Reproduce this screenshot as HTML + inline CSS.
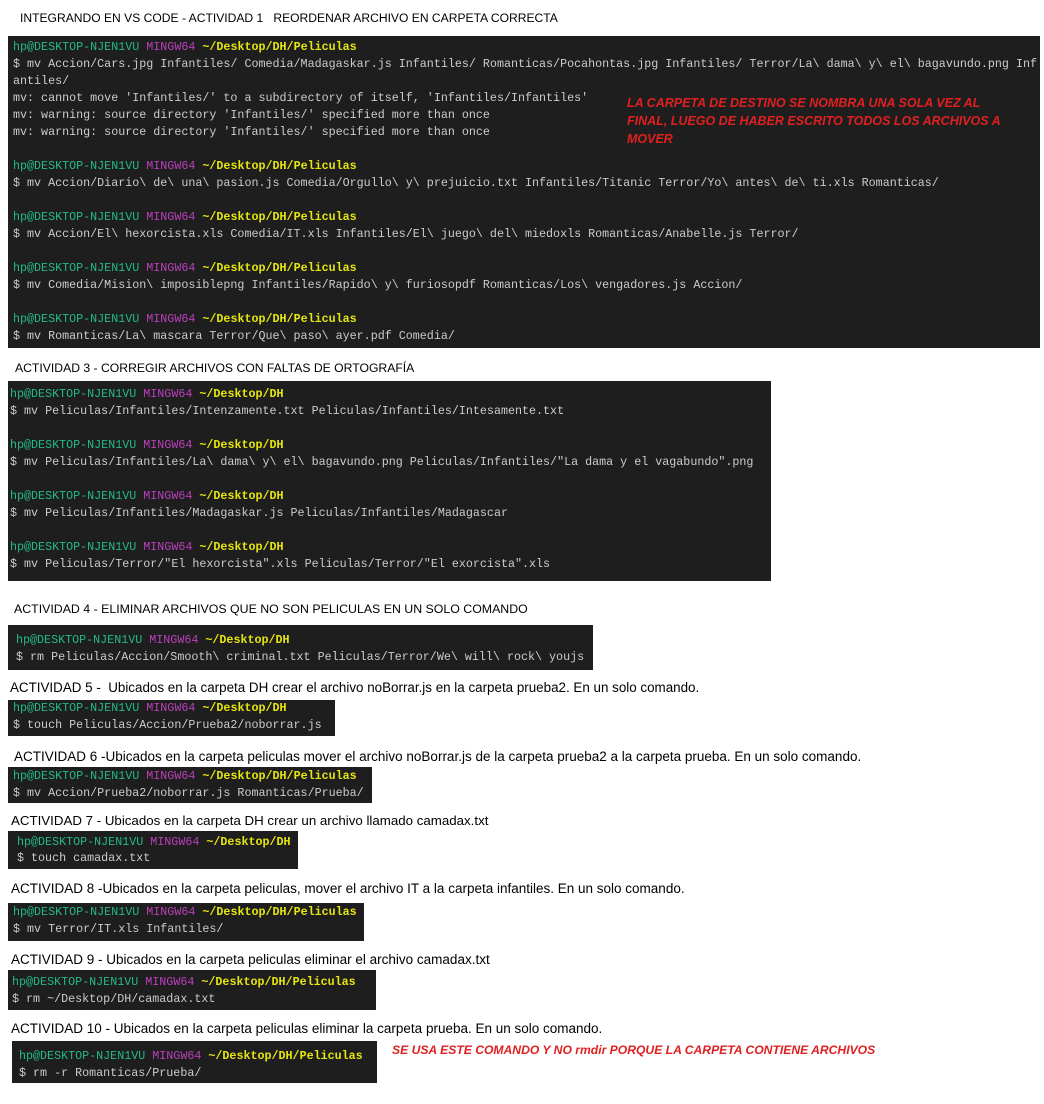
<!DOCTYPE html>
<html><head><meta charset="utf-8"><style>
body{margin:0;width:1044px;height:1104px;background:#fff;position:relative;overflow:hidden;font-family:"Liberation Sans",sans-serif}
.t{position:absolute;font-size:12.5px;color:#000;white-space:pre;line-height:14px}
.b{position:absolute;background:#1e1e1e}
.l{position:absolute;font-family:"Liberation Mono",monospace;font-size:11.7px;line-height:17px;color:#cccccc;white-space:pre}
.g{color:#23b98b}.m{color:#bc3fbc}.y{color:#e5e510;font-weight:bold}
.r{position:absolute;color:#e02020;font-style:italic;font-weight:bold;font-size:12.5px;line-height:18px;white-space:pre}
</style></head><body>
<div class="t" style="left:20px;top:11px;font-size:12.1px">INTEGRANDO EN VS CODE - ACTIVIDAD 1   REORDENAR ARCHIVO EN CARPETA CORRECTA</div>
<div class="b" style="left:8px;top:36px;width:1032px;height:312px"></div>
<div class="l" style="left:13px;top:39px"><span class="g">hp@DESKTOP-NJEN1VU</span> <span class="m">MINGW64</span> <span class="y">~/Desktop/DH/Peliculas</span></div>
<div class="l" style="left:13px;top:56px">$ mv Accion/Cars.jpg Infantiles/ Comedia/Madagaskar.js Infantiles/ Romanticas/Pocahontas.jpg Infantiles/ Terror/La\ dama\ y\ el\ bagavundo.png Inf</div>
<div class="l" style="left:13px;top:73px">antiles/</div>
<div class="l" style="left:13px;top:90px">mv: cannot move 'Infantiles/' to a subdirectory of itself, 'Infantiles/Infantiles'</div>
<div class="l" style="left:13px;top:107px">mv: warning: source directory 'Infantiles/' specified more than once</div>
<div class="l" style="left:13px;top:124px">mv: warning: source directory 'Infantiles/' specified more than once</div>
<div class="r" style="left:627px;top:94px">LA CARPETA DE DESTINO SE NOMBRA UNA SOLA VEZ AL
FINAL, LUEGO DE HABER ESCRITO TODOS LOS ARCHIVOS A
MOVER</div>
<div class="l" style="left:13px;top:158px"><span class="g">hp@DESKTOP-NJEN1VU</span> <span class="m">MINGW64</span> <span class="y">~/Desktop/DH/Peliculas</span></div>
<div class="l" style="left:13px;top:175px">$ mv Accion/Diario\ de\ una\ pasion.js Comedia/Orgullo\ y\ prejuicio.txt Infantiles/Titanic Terror/Yo\ antes\ de\ ti.xls Romanticas/</div>
<div class="l" style="left:13px;top:209px"><span class="g">hp@DESKTOP-NJEN1VU</span> <span class="m">MINGW64</span> <span class="y">~/Desktop/DH/Peliculas</span></div>
<div class="l" style="left:13px;top:226px">$ mv Accion/El\ hexorcista.xls Comedia/IT.xls Infantiles/El\ juego\ del\ miedoxls Romanticas/Anabelle.js Terror/</div>
<div class="l" style="left:13px;top:260px"><span class="g">hp@DESKTOP-NJEN1VU</span> <span class="m">MINGW64</span> <span class="y">~/Desktop/DH/Peliculas</span></div>
<div class="l" style="left:13px;top:277px">$ mv Comedia/Mision\ imposiblepng Infantiles/Rapido\ y\ furiosopdf Romanticas/Los\ vengadores.js Accion/</div>
<div class="l" style="left:13px;top:311px"><span class="g">hp@DESKTOP-NJEN1VU</span> <span class="m">MINGW64</span> <span class="y">~/Desktop/DH/Peliculas</span></div>
<div class="l" style="left:13px;top:328px">$ mv Romanticas/La\ mascara Terror/Que\ paso\ ayer.pdf Comedia/</div>

<div class="t" style="left:15px;top:361px;font-size:12.2px">ACTIVIDAD 3 - CORREGIR ARCHIVOS CON FALTAS DE ORTOGRAFÍA</div>
<div class="b" style="left:8px;top:381px;width:763px;height:200px"></div>
<div class="l" style="left:10px;top:386px"><span class="g">hp@DESKTOP-NJEN1VU</span> <span class="m">MINGW64</span> <span class="y">~/Desktop/DH</span></div>
<div class="l" style="left:10px;top:403px">$ mv Peliculas/Infantiles/Intenzamente.txt Peliculas/Infantiles/Intesamente.txt</div>
<div class="l" style="left:10px;top:437px"><span class="g">hp@DESKTOP-NJEN1VU</span> <span class="m">MINGW64</span> <span class="y">~/Desktop/DH</span></div>
<div class="l" style="left:10px;top:454px">$ mv Peliculas/Infantiles/La\ dama\ y\ el\ bagavundo.png Peliculas/Infantiles/"La dama y el vagabundo".png</div>
<div class="l" style="left:10px;top:488px"><span class="g">hp@DESKTOP-NJEN1VU</span> <span class="m">MINGW64</span> <span class="y">~/Desktop/DH</span></div>
<div class="l" style="left:10px;top:505px">$ mv Peliculas/Infantiles/Madagaskar.js Peliculas/Infantiles/Madagascar</div>
<div class="l" style="left:10px;top:539px"><span class="g">hp@DESKTOP-NJEN1VU</span> <span class="m">MINGW64</span> <span class="y">~/Desktop/DH</span></div>
<div class="l" style="left:10px;top:556px">$ mv Peliculas/Terror/"El hexorcista".xls Peliculas/Terror/"El exorcista".xls</div>

<div class="t" style="left:14px;top:602px;font-size:12.35px">ACTIVIDAD 4 - ELIMINAR ARCHIVOS QUE NO SON PELICULAS EN UN SOLO COMANDO</div>
<div class="b" style="left:8px;top:625px;width:585px;height:45px"></div>
<div class="l" style="left:16px;top:632px"><span class="g">hp@DESKTOP-NJEN1VU</span> <span class="m">MINGW64</span> <span class="y">~/Desktop/DH</span></div>
<div class="l" style="left:16px;top:649px">$ rm Peliculas/Accion/Smooth\ criminal.txt Peliculas/Terror/We\ will\ rock\ youjs</div>

<div class="t" style="left:10px;top:681px;font-size:13.4px">ACTIVIDAD 5 -  Ubicados en la carpeta DH crear el archivo noBorrar.js en la carpeta prueba2. En un solo comando.</div>
<div class="b" style="left:8px;top:700px;width:327px;height:36px"></div>
<div class="l" style="left:13px;top:700px"><span class="g">hp@DESKTOP-NJEN1VU</span> <span class="m">MINGW64</span> <span class="y">~/Desktop/DH</span></div>
<div class="l" style="left:13px;top:717px">$ touch Peliculas/Accion/Prueba2/noborrar.js</div>

<div class="t" style="left:14px;top:750px;font-size:13.5px">ACTIVIDAD 6 -Ubicados en la carpeta peliculas mover el archivo noBorrar.js de la carpeta prueba2 a la carpeta prueba. En un solo comando.</div>
<div class="b" style="left:8px;top:767px;width:364px;height:36px"></div>
<div class="l" style="left:13px;top:768px"><span class="g">hp@DESKTOP-NJEN1VU</span> <span class="m">MINGW64</span> <span class="y">~/Desktop/DH/Peliculas</span></div>
<div class="l" style="left:13px;top:785px">$ mv Accion/Prueba2/noborrar.js Romanticas/Prueba/</div>

<div class="t" style="left:11px;top:814px;font-size:13.3px">ACTIVIDAD 7 - Ubicados en la carpeta DH crear un archivo llamado camadax.txt</div>
<div class="b" style="left:8px;top:831px;width:290px;height:38px"></div>
<div class="l" style="left:17px;top:834px"><span class="g">hp@DESKTOP-NJEN1VU</span> <span class="m">MINGW64</span> <span class="y">~/Desktop/DH</span></div>
<div class="l" style="left:17px;top:850px">$ touch camadax.txt</div>

<div class="t" style="left:11px;top:882px;font-size:13.5px">ACTIVIDAD 8 -Ubicados en la carpeta peliculas, mover el archivo IT a la carpeta infantiles. En un solo comando.</div>
<div class="b" style="left:8px;top:903px;width:356px;height:38px"></div>
<div class="l" style="left:13px;top:904px"><span class="g">hp@DESKTOP-NJEN1VU</span> <span class="m">MINGW64</span> <span class="y">~/Desktop/DH/Peliculas</span></div>
<div class="l" style="left:13px;top:921px">$ mv Terror/IT.xls Infantiles/</div>

<div class="t" style="left:11px;top:953px;font-size:13.5px">ACTIVIDAD 9 - Ubicados en la carpeta peliculas eliminar el archivo camadax.txt</div>
<div class="b" style="left:8px;top:970px;width:368px;height:40px"></div>
<div class="l" style="left:12px;top:974px"><span class="g">hp@DESKTOP-NJEN1VU</span> <span class="m">MINGW64</span> <span class="y">~/Desktop/DH/Peliculas</span></div>
<div class="l" style="left:12px;top:991px">$ rm ~/Desktop/DH/camadax.txt</div>

<div class="t" style="left:11px;top:1022px;font-size:13.5px">ACTIVIDAD 10 - Ubicados en la carpeta peliculas eliminar la carpeta prueba. En un solo comando.</div>
<div class="b" style="left:12px;top:1041px;width:365px;height:42px"></div>
<div class="l" style="left:19px;top:1048px"><span class="g">hp@DESKTOP-NJEN1VU</span> <span class="m">MINGW64</span> <span class="y">~/Desktop/DH/Peliculas</span></div>
<div class="l" style="left:19px;top:1065px">$ rm -r Romanticas/Prueba/</div>
<div class="r" style="left:392px;top:1041px;font-size:12.15px">SE USA ESTE COMANDO Y NO rmdir PORQUE LA CARPETA CONTIENE ARCHIVOS</div>
</body></html>
